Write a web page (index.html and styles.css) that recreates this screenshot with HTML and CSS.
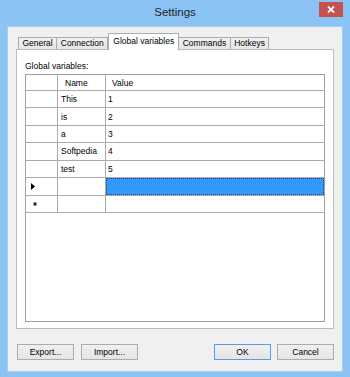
FILE: index.html
```html
<!DOCTYPE html>
<html lang="en">
<head>
    <meta charset="UTF-8">
    <title>Settings</title>
    <link rel="stylesheet" href="styles.css">
</head>
<body>
    <div class="window">
        <div class="titlebar">
            <span></span>
            <div class="title">Settings</div>
            <div class="controls">
                <button class="close" title="Close">
                    <svg width="8" height="7" viewBox="0 0 8 7"><path d="M1 0.5 L7 6.5 M7 0.5 L1 6.5" stroke="#fff" stroke-width="1.8" fill="none"/></svg>
                </button>
            </div>
        </div>
        <div class="client">
            <div class="tabs">
                <div class="tab">General</div>
                <div class="tab">Connection</div>
                <div class="tab active">Global variables</div>
                <div class="tab">Commands</div>
                <div class="tab">Hotkeys</div>
            </div>
            <div class="panel">
                <div class="label">Global variables:</div>
                <div class="grid">
                    <div class="row head">
                        <div class="cell rowhead"></div>
                        <div class="cell name">Name</div>
                        <div class="cell value">Value</div>
                    </div>
                    <div class="row">
                        <div class="cell rowhead"></div>
                        <div class="cell">This</div>
                        <div class="cell">1</div>
                    </div>
                    <div class="row">
                        <div class="cell rowhead"></div>
                        <div class="cell">is</div>
                        <div class="cell">2</div>
                    </div>
                    <div class="row">
                        <div class="cell rowhead"></div>
                        <div class="cell">a</div>
                        <div class="cell">3</div>
                    </div>
                    <div class="row">
                        <div class="cell rowhead"></div>
                        <div class="cell">Softpedia</div>
                        <div class="cell">4</div>
                    </div>
                    <div class="row">
                        <div class="cell rowhead"></div>
                        <div class="cell">test</div>
                        <div class="cell">5</div>
                    </div>
                    <div class="row current">
                        <div class="cell rowhead">
                            <svg width="4" height="7" viewBox="0 0 4 7"><polygon points="0,0 4,3.5 0,7" fill="#000"/></svg>
                        </div>
                        <div class="cell"></div>
                        <div class="cell selected"></div>
                    </div>
                    <div class="row">
                        <div class="cell rowhead new">
                            <svg width="4" height="4" viewBox="0 0 4 4"><path d="M2 0 V4 M0.3 1 L3.7 3 M3.7 1 L0.3 3" stroke="#000" stroke-width="0.9"/></svg>
                        </div>
                        <div class="cell"></div>
                        <div class="cell"></div>
                    </div>
                </div>
            </div>
            <div class="buttons">
                <div class="group">
                    <button class="btn">Export...</button>
                    <button class="btn">Import...</button>
                </div>
                <div class="group right">
                    <button class="btn default">OK</button>
                    <button class="btn">Cancel</button>
                </div>
            </div>
        </div>
    </div>
</body>
</html>
```

FILE: styles.css
```css
* {
    margin: 0;
    padding: 0;
    box-sizing: border-box;
}
body {
    font-family: "Liberation Sans", Arial, sans-serif;
    font-size: 8.5px;
    color: #000;
    background: #8cc3f5;
}
.window {
    width: 350px;
    height: 377px;
    background: #8cc3f5;
    padding: 0 7px 5px 7px;
    display: flex;
    flex-direction: column;
}
.titlebar {
    height: 26px;
    display: grid;
    grid-template-columns: 1fr auto 1fr;
    align-items: start;
}
.title {
    font-size: 11.5px;
    line-height: 24px;
    color: #222;
}
.controls {
    display: flex;
    justify-content: flex-end;
}
.close {
    margin-top: 2px;
    width: 24px;
    height: 15px;
    border: none;
    background: #c75050;
    display: flex;
    align-items: center;
    justify-content: center;
}
.client {
    flex: 1;
    background: #f0f0f0;
    border: 1px solid #a9cdef;
    padding: 6px 8px 11px 8px;
    display: flex;
    flex-direction: column;
}
.tabs {
    display: flex;
    align-items: flex-end;
    height: 16px;
    padding-left: 2px;
}
.tab {
    height: 12px;
    line-height: 11px;
    padding: 0 3.5px;
    border: 1px solid #acacac;
    border-bottom: none;
    border-left: none;
    background: linear-gradient(#f0f0f0, #e5e5e5);
    color: #000;
}
.tab:first-child {
    border-left: 1px solid #acacac;
}
.tab.active {
    height: 17px;
    line-height: 14px;
    margin-bottom: -1px;
    padding: 0 4px;
    background: #fff;
    border-left: 1px solid #acacac;
    position: relative;
    z-index: 1;
}
.panel {
    height: 280px;
    background: #fff;
    border: 1px solid #bcbcbc;
    padding: 10px 8px 6px 8px;
    display: flex;
    flex-direction: column;
}
.label {
    line-height: 12px;
    height: 12px;
    margin-bottom: 2px;
}
.grid {
    flex: 1;
    border: 1px solid #a0a0a0;
    background: #fff;
}
.row {
    display: grid;
    grid-template-columns: 32px 48px 1fr;
    height: 17.43px;
    border-bottom: 1px solid #ababab;
}
.row.head {
    height: 16px;
}
.cell {
    border-right: 1px solid #ababab;
    padding-left: 3px;
    display: flex;
    align-items: center;
    white-space: nowrap;
}
.cell:last-child {
    border-right: none;
    padding-left: 2px;
}
.head .name {
    padding-left: 7px;
}
.head .value {
    padding-left: 6px;
}
.rowhead {
    padding-left: 5px;
}
.rowhead.new {
    padding-left: 7px;
}
.selected {
    background: #3399ff;
    outline: 1px dotted #23456e;
    outline-offset: -1px;
}
.buttons {
    margin-top: 15px;
    padding: 0 0 0 1px;
    display: flex;
    justify-content: space-between;
}
.group {
    display: flex;
    gap: 7px;
}
.group.right {
    gap: 6px;
}
.btn {
    width: 57px;
    height: 16px;
    border: 1px solid #acacac;
    background: linear-gradient(#f0f0f0, #e5e5e5);
    font-family: "Liberation Sans", Arial, sans-serif;
    font-size: 8.5px;
    color: #000;
}
.btn.default {
    border-color: #569de5;
}
```
